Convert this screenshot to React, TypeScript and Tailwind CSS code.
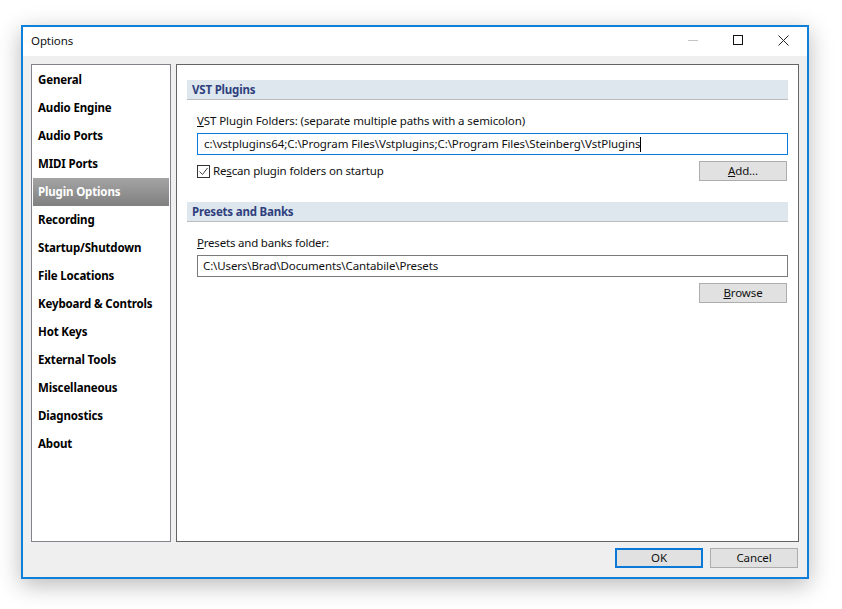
import React from "react";

const NAV = [
  "General",
  "Audio Engine",
  "Audio Ports",
  "MIDI Ports",
  "Plugin Options",
  "Recording",
  "Startup/Shutdown",
  "File Locations",
  "Keyboard & Controls",
  "Hot Keys",
  "External Tools",
  "Miscellaneous",
  "Diagnostics",
  "About",
];

function SectionHeader({ children }: { children: React.ReactNode }) {
  return (
    <div className="h-5 bg-[#dee7ee] border-b border-[#bcbcbc] pl-[5px] text-[11.5px] tracking-[-0.2px] leading-[19px] font-bold text-[#2f3f7d]">
      {children}
    </div>
  );
}

function Button({ children, focused }: { children: React.ReactNode; focused?: boolean }) {
  return (
    <button
      className={`w-[88px] h-5 bg-[#e1e1e1] text-[11.5px] tracking-[-0.1px] leading-none text-[#111] flex items-center justify-center ${
        focused ? "border-2 border-[#0a78d7]" : "border border-[#adadad]"
      }`}
    >
      {children}
    </button>
  );
}

export default function App() {
  return (
    <div className="w-[842px] h-[609px] bg-white pt-[25px] pl-[21px] font-['Noto_Sans','Open_Sans',sans-serif]">
      <div className="w-[788px] h-[554px] border-2 border-[#0f7fd9] bg-[#efefef] flex flex-col shadow-[0_6px_22px_rgba(0,0,0,0.28)]">
        {/* title bar */}
        <div className="h-[29px] shrink-0 bg-white flex items-center pl-2 pb-[2px] text-[11.5px] tracking-[-0.1px] text-[#111]">
          <span className="flex-1">Options</span>
          <svg width="120" height="27" viewBox="0 0 120 27" className="shrink-0" fill="none">
            <path d="M3 13.5h10" stroke="#c4c4c4" />
            <rect x="48.5" y="8.5" width="9" height="9" stroke="#111" />
            <path d="M93.5 8.5l10 10M103.5 8.5l-10 10" stroke="#222" />
          </svg>
          <span className="w-[2px]" />
        </div>

        <div className="flex-1 flex flex-col pl-2 pr-2 pt-2">
          <div className="h-[478px] flex gap-[5px]">
            {/* sidebar */}
            <div className="w-[140px] bg-white border border-[#83838b] p-px">
              {NAV.map((item) => (
                <div
                  key={item}
                  className={`h-7 pl-[5px] text-[11.5px] tracking-[-0.15px] leading-[27px] font-bold ${
                    item === "Plugin Options"
                      ? "bg-gradient-to-b from-[#a4a4a4] to-[#808080] text-white"
                      : "text-black"
                  }`}
                >
                  {item}
                </div>
              ))}
            </div>

            {/* main panel */}
            <div className="w-[623px] bg-white border border-[#646464] pt-[15px] pl-[10px]">
              <div className="w-[601px]">
                <SectionHeader>VST Plugins</SectionHeader>
                <div className="pl-[10px] text-[11.5px] tracking-[-0.1px] text-[#111]">
                  <div className="mt-[12px] h-[18px] leading-[18px]">
                    <span className="underline">V</span>ST Plugin Folders: (separate multiple paths with a semicolon)
                  </div>
                  <div className="mt-[3px] h-[22px] border border-[#0a78d7] pl-[6px] pt-[1px] leading-[18px] tracking-[-0.075px] flex">
                    <span>c:\vstplugins64;C:\Program Files\Vstplugins;C:\Program Files\Steinberg\VstPlugins</span>
                    <span className="w-px h-[15px] mt-[2px] bg-black" />
                  </div>
                  <div className="mt-[6px] h-5 flex items-center pr-px">
                    <div className="w-[13px] h-[13px] border border-[#333] bg-white flex items-center justify-center">
                      <svg width="11" height="11" viewBox="0 0 11 11" fill="none">
                        <path d="M1.5 5.5l3 3 5-6.5" stroke="#444" />
                      </svg>
                    </div>
                    <span className="ml-[3px] flex-1 tracking-[-0.15px]">
                      Re<span className="underline">s</span>can plugin folders on startup
                    </span>
                    <Button>
                      <span>
                        <span className="underline">A</span>dd...
                      </span>
                    </Button>
                  </div>
                </div>
              </div>

              <div className="w-[601px] mt-[21px]">
                <SectionHeader>Presets and Banks</SectionHeader>
                <div className="pl-[10px] text-[11.5px] tracking-[-0.1px] text-[#111]">
                  <div className="mt-[12px] h-[18px] leading-[18px] tracking-[-0.2px]">
                    <span className="underline">P</span>resets and banks folder:
                  </div>
                  <div className="mt-[3px] h-[22px] border border-[#7a7a7a] pl-[5px] pt-[1px] leading-[18px] tracking-[-0.13px]">
                    C:\Users\Brad\Documents\Cantabile\Presets
                  </div>
                  <div className="mt-[6px] flex justify-end pr-px">
                    <Button>
                      <span>
                        <span className="underline">B</span>rowse
                      </span>
                    </Button>
                  </div>
                </div>
              </div>
            </div>
          </div>

          {/* footer */}
          <div className="mt-[6px] pr-px flex justify-end gap-[7px]">
            <Button focused>OK</Button>
            <Button>Cancel</Button>
          </div>
        </div>
      </div>
    </div>
  );
}
